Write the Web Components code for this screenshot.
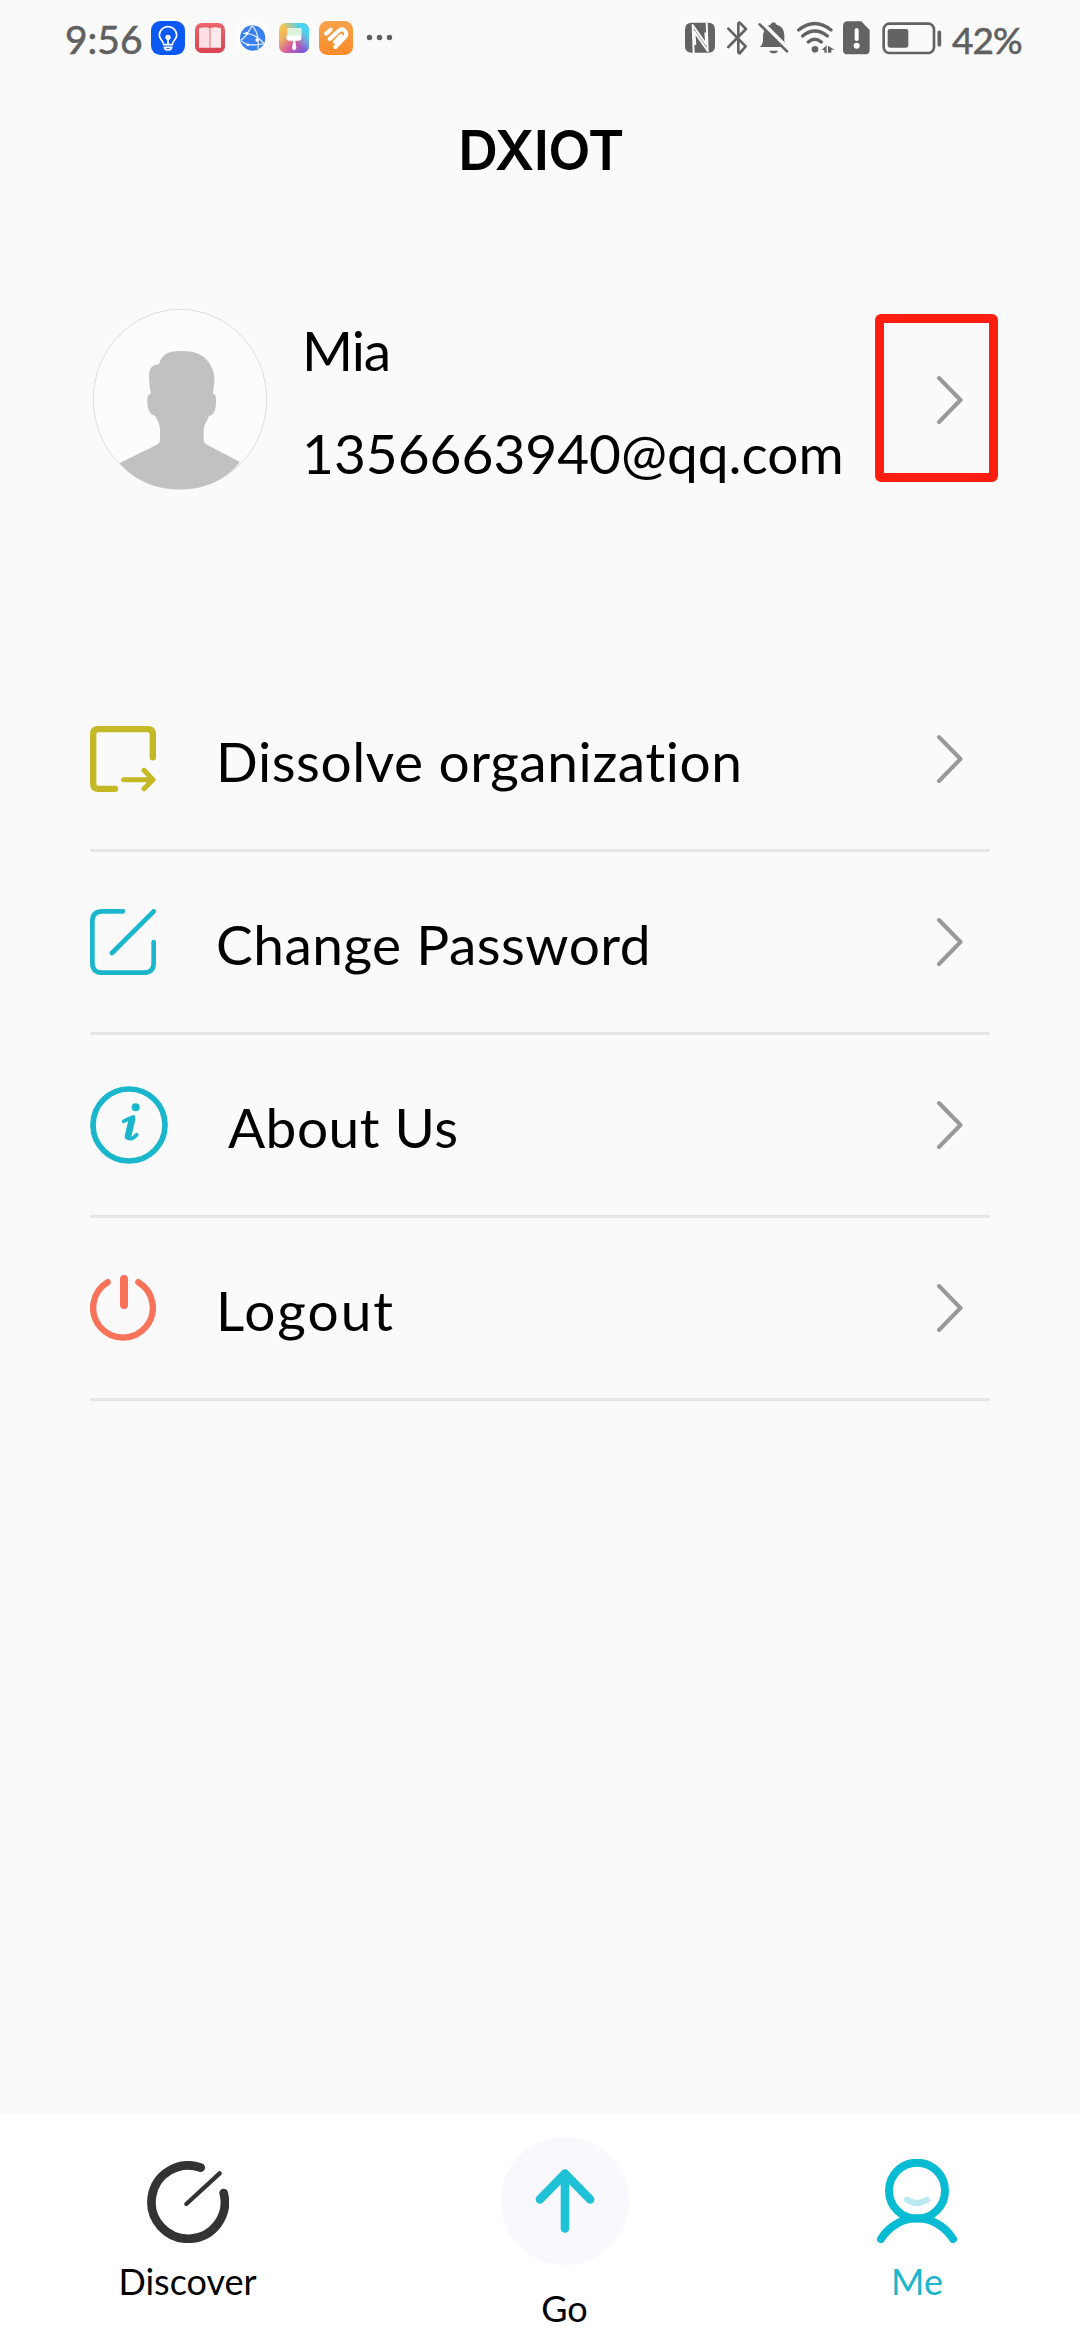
<!DOCTYPE html>
<html lang="en">
<head>
<meta charset="utf-8">
<title>DXIOT</title>
<style>
  html, body { margin: 0; height: 100%; }
  body {
    background: #fafafa;
    color: #000;
    font-family: Lato, "Noto Sans", sans-serif;
  }
</style>
</head>
<body>
<app-screen>
  <status-bar slot="status" time="9:56" battery="42%"></status-bar>
  <page-title slot="title">DXIOT</page-title>
  <user-profile>
    <span slot="name">Mia</span>
    <span slot="email">1356663940@qq.com</span>
  </user-profile>
  <menu-list>
    <menu-row icon="dissolve" style="--spacing: 0.6px">Dissolve organization</menu-row>
    <menu-row icon="edit" style="--spacing: 0.5px">Change Password</menu-row>
    <menu-row icon="about" style="--spacing: 0.5px">About Us</menu-row>
    <menu-row icon="power" style="--spacing: 2px">Logout</menu-row>
  </menu-list>
  <tab-bar slot="tabs">
    <tab-item icon="discover">Discover</tab-item>
    <tab-item icon="go">Go</tab-item>
    <tab-item icon="me" active>Me</tab-item>
  </tab-bar>
</app-screen>

<script>
// Icons, by name
const ICONS = {
  dissolve: `<svg width="66" height="66" viewBox="0 0 198 198" fill="none" stroke="#c5b825" stroke-linecap="round" stroke-linejoin="round">
    <path stroke-width="19" d="M75 188.500H25Q9.500 188.500 9.500 173V25Q9.500 9.500 25 9.500H173Q188.500 9.500 188.500 25V94"/>
    <path stroke-width="15" d="M101 161H188M162 133L189 161L162 188"/></svg>`,
  edit: `<svg width="66" height="66" viewBox="0 0 198 198" fill="none" stroke="#1ab7cc" stroke-width="14" stroke-linecap="round">
    <path d="M99 7H37Q7 7 7 37V161Q7 191 37 191H161Q191 191 191 161V99M66 132L191 7"/></svg>`,
  about: `<svg width="78" height="78" viewBox="0 0 234 234" fill="none" stroke="#1ab7cc" stroke-linecap="round" stroke-linejoin="round">
    <circle cx="117" cy="117" r="108" stroke-width="17"/>
    <circle cx="137" cy="64" r="12" fill="#1ab7cc" stroke="none"/>
    <path stroke-width="20" d="M126 100L114 151"/>
    <path stroke-width="11" d="M101 106Q114 98 130 93M113 156Q125 163 140 146"/></svg>`,
  power: `<svg width="66" height="66" viewBox="0 0 198 198" fill="none" stroke="#f9735a" stroke-linecap="round">
    <path stroke-width="19" d="M53 21.500A89.500 89.500 0 1 0 145 21.500"/>
    <path stroke-width="24" d="M102 12V90"/></svg>`,
  discover: `<svg width="82" height="82" viewBox="0 0 246 246" fill="none" stroke="#333" stroke-linecap="round">
    <path stroke-width="26" d="M161 20A110 110 0 1 0 230 96"/>
    <path stroke-width="13" d="M118 129L218 37"/></svg>`,
  go: `<svg width="128" height="128" viewBox="0 0 384 384" fill="none" stroke="#1fc1d6" stroke-width="26" stroke-linecap="round" stroke-linejoin="round">
    <circle cx="192" cy="192" r="192" fill="#f8f8fd" stroke="none"/>
    <path d="M192 274V110M117 187L192 110L267 187"/></svg>`,
  me: `<svg width="80" height="84" viewBox="0 0 240 252" fill="none" stroke="#06bbd2" stroke-linecap="round">
    <circle cx="120" cy="95" r="84" stroke-width="24"/>
    <path stroke-width="24" d="M12 240C35 202 76 178 120 178S205 202 228 240"/>
    <path stroke="#b9e9ee" stroke-width="18" d="M90 122Q120 143 150 122"/></svg>`,
  chevron: `<svg width="27" height="50" viewBox="0 0 27 50" fill="none" stroke="#999" stroke-width="4" stroke-linecap="round" stroke-linejoin="round">
    <path d="M3 3L24.500 25L3 47"/></svg>`,
  avatar: `<svg width="174" height="181" viewBox="39 56 522 543" preserveAspectRatio="none">
    <ellipse cx="300" cy="327" rx="260" ry="270" fill="#fcfcfc" stroke="#ddd" stroke-width="3"/>
    <path fill="#c1c1c1" d="M237 222C244 195 262 182 300 182C342 182 370 190 388 219C401 240 404 255 403 276L399 310C408 312 408 318 408 332C408 358 403 374 387 377C381 393 371 402 371 425V448Q371 458 381 463L480 515C440 565 380 597 300 597C220 597 158 566 119 518L229 464Q240 459 240 448V419C240 400 231 389 226 377C209 372 202 356 202 334C202 319 202 313 213 310C209 294 207 275 207 258C207 235 217 222 237 222Z"/></svg>`
};

const STATUS_LEFT = `
  <svg style="margin-left:10px" width="34" height="34" viewBox="0 0 102 102" fill="none" stroke="#fff" stroke-width="5" stroke-linecap="round">
    <rect width="102" height="102" rx="28" fill="#0b58f2" stroke="none"/>
    <path d="M38 71C38 58 25 57 25 43A26 26 0 0 1 77 43C77 57 64 58 64 71ZM40 79H62Q61 87 51 87T40 79M51 55V70"/>
    <circle cx="51" cy="49" r="8" fill="#fff" stroke="none"/></svg>
  <svg style="margin-left:10px" width="30" height="30" viewBox="0 0 90 90">
    <defs><linearGradient id="r" x2="0" y2="1"><stop stop-color="#ec666c"/><stop offset="1" stop-color="#d8434e"/></linearGradient></defs>
    <rect width="90" height="90" rx="20" fill="url(#r)"/>
    <path d="M12 16Q34 10 44 16V74H12Z" fill="#fde0e5"/><path d="M46 16Q60 10 78 16V74H46Z" fill="#fce9ec"/>
    <path d="M45 16V74" stroke="#e79ba5" stroke-width="3"/></svg>
  <svg style="margin-left:13px" width="29" height="30" viewBox="0 0 87 90" fill="none" stroke="#d5e7ff" stroke-width="4">
    <rect width="87" height="90" rx="20" fill="#fff" stroke="none"/>
    <circle cx="44" cy="45" r="38" fill="#397fed" stroke="none"/>
    <path d="M8 52Q24 43 42 8M15 31Q53 30 78 62M42 8Q65 29 60 78M10 54Q32 73 79 62"/>
    <g fill="#fff" stroke="none"><circle cx="26" cy="31" r="5"/><circle cx="57" cy="51" r="5"/><circle cx="29" cy="66" r="4"/></g></svg>
  <svg style="margin-left:12px" width="30" height="30" viewBox="0 0 90 90">
    <defs>
      <linearGradient id="a" x2="1" y2="1"><stop stop-color="#f7d34f"/><stop offset=".3" stop-color="#eeb45c"/><stop offset=".58" stop-color="#d95c9d"/><stop offset="1" stop-color="#5558f5"/></linearGradient>
      <linearGradient id="b" x1=".3" y1=".6" x2="1" y2="0"><stop offset=".2" stop-color="#55dfe9" stop-opacity="0"/><stop offset=".7" stop-color="#45d5f2"/></linearGradient>
    </defs>
    <rect width="90" height="90" rx="20" fill="url(#a)"/><rect width="90" height="90" rx="20" fill="url(#b)"/>
    <path fill="#fff" d="M26 16H67V44Q67 53 58 53H49L52 75Q46 89 39 75L43 53H31Q22 53 22 44V38H26Z"/>
    <path fill="#d9f4da" d="M26 18H67V38H26Z"/></svg>
  <svg style="margin-left:10px" width="34" height="34" viewBox="0 0 102 102" fill="none" stroke="#fff" stroke-width="12" stroke-linecap="round" stroke-linejoin="round">
    <defs><linearGradient id="o" x2="0" y2="1"><stop stop-color="#f8a34b"/><stop offset="1" stop-color="#fb8b2a"/></linearGradient></defs>
    <rect width="102" height="102" rx="25" fill="url(#o)" stroke="none"/>
    <path d="M21 38L35 26M32 54L61 28Q72 21 79 31Q85 41 77 49L49 78"/>
    <path d="M48 63L66 45"/></svg>
  <svg style="margin-left:13px" width="27" height="34" viewBox="0 0 27 34" fill="#606060">
    <circle cx="3.500" cy="16.500" r="2.700"/><circle cx="13.500" cy="16.500" r="2.700"/><circle cx="23.500" cy="16.500" r="2.700"/></svg>`;

const STATUS_RIGHT = `
  <svg width="30" height="32" viewBox="0 0 90 96">
    <path fill="#636363" d="M20 2H70Q90 2 90 24V72Q90 92 70 92H20Q0 92 0 72V24Q0 2 20 2Z"/>
    <path fill="none" stroke="#fafafa" stroke-width="6" stroke-linejoin="round" d="M26 93L23 9L64 68L61 31M65 1L68 87L28 29L31 69"/></svg>
  <svg style="margin-left:12px" width="21" height="34" viewBox="0 0 63 102" fill="none" stroke="#636363" stroke-width="8" stroke-linecap="round" stroke-linejoin="round">
    <path d="M4 23L56 76L38 97Q34 97 34 91V10Q34 4 38 5L57 24L4 78"/></svg>
  <svg style="margin-left:10px" width="31" height="34" viewBox="0 0 93 102" fill="#636363">
    <path d="M5 78Q14 72 15 61V42Q20 13 37 11Q47 -3 56 11Q78 16 79 42V61Q80 71 89 78ZM34 89H60Q57 97 47 97T34 89Z"/>
    <path fill="none" stroke="#fafafa" stroke-width="17" d="M5 1L94 90"/>
    <path fill="none" stroke="#636363" stroke-width="8" stroke-linecap="round" d="M5 10L87 91"/></svg>
  <svg style="margin-left:8px" width="38" height="34" viewBox="0 0 114 102" fill="none" stroke="#636363" stroke-width="10" stroke-linecap="round">
    <path d="M5 27Q53 -12 102 27M17 45Q53 15 91 45M34 63Q53 47 73 63"/>
    <circle cx="54" cy="85" r="10" fill="#636363" stroke="none"/>
    <path fill="#636363" stroke="none" d="M74 87L89 73V95H82V87ZM93 74L113 86H103V95H93Z"/></svg>
  <svg style="margin-left:8px" width="27" height="34" viewBox="0 0 81 102" fill="#636363">
    <path d="M14 1H55L80 27V86Q80 100 66 100H14Q0 100 0 86V15Q0 1 14 1Z"/>
    <path stroke="#fff" stroke-width="12" stroke-linecap="round" d="M41 27V54"/><circle cx="41" cy="74" r="9" fill="#fff"/></svg>
  <svg style="margin-left:12px" width="60" height="34" viewBox="0 0 180 102" fill="none" stroke="#636363">
    <rect x="5" y="8" width="151" height="88" rx="17" stroke-width="8"/>
    <rect x="17" y="24" width="62" height="56" rx="7" fill="#636363" stroke="none"/>
    <path stroke-width="11" stroke-linecap="round" d="M172 34V71"/></svg>`;

// Base class: opens the shadow root and fills it
class BaseElement extends HTMLElement {
  connectedCallback() {
    if (this.shadowRoot) return;
    this.attachShadow({ mode: 'open' }).innerHTML = this.render();
  }
}

class AppScreen extends BaseElement {
  render() {
    return `
      <style>
        :host { display: flex; flex-direction: column; height: 2340px; overflow: hidden; }
        main { flex: 1; }
      </style>
      <slot name="status"></slot>
      <slot name="title"></slot>
      <main><slot></slot></main>
      <slot name="tabs"></slot>`;
  }
}

class StatusBar extends BaseElement {
  render() {
    return `
      <style>
        :host {
          display: flex; justify-content: space-between; box-sizing: border-box;
          height: 76px; padding: 0 59px 0 65px; color: #606060;
        }
        div { display: flex; align-items: center; }
        .time, .battery { -webkit-text-stroke: 0.6px #606060; white-space: nowrap; }
        .time { font-size: 39px; width: 76px; padding-top: 2px; }
        .battery { font-size: 37px; width: 69px; margin-left: 10px; padding-top: 2px; letter-spacing: -1px; }
        svg { flex: none; }
      </style>
      <div><span class="time">${this.getAttribute('time')}</span>${STATUS_LEFT}</div>
      <div>${STATUS_RIGHT}<span class="battery">${this.getAttribute('battery')}</span></div>`;
  }
}

class PageTitle extends BaseElement {
  render() {
    return `
      <style>
        :host {
          display: flex; align-items: center; justify-content: center; height: 148px;
          font: 600 55px Inter, sans-serif; letter-spacing: -0.7px; padding-left: 2px;
        }
      </style>
      <slot></slot>`;
  }
}

class UserProfile extends BaseElement {
  render() {
    return `
      <style>
        :host {
          display: flex; align-items: center; box-sizing: border-box; height: 181px;
          margin-top: 85px; padding: 0 117px 0 93px; position: relative;
        }
        .texts { flex: 1; margin-left: 35px; padding-top: 4px; font-size: 55px; line-height: 66px; }
        .name { letter-spacing: -1px; }
        .email { margin-top: 37px; white-space: nowrap; }
        svg { flex: none; display: block; }
        .marker {
          position: absolute; left: 875px; top: 5px; width: 123px; height: 168px;
          box-sizing: border-box; border: 9px solid #ff1e10; border-radius: 6px;
        }
      </style>
      ${ICONS.avatar}
      <div class="texts">
        <div class="name"><slot name="name"></slot></div>
        <div class="email"><slot name="email"></slot></div>
      </div>
      ${ICONS.chevron}
      <div class="marker"></div>`;
  }
}

class MenuList extends BaseElement {
  render() {
    return `
      <style>
        :host { display: flex; flex-direction: column; margin: 179px 90px 0; }
      </style>
      <slot></slot>`;
  }
}

class MenuRow extends BaseElement {
  render() {
    return `
      <style>
        :host {
          display: flex; align-items: center; gap: 60px; height: 180px;
          padding-right: 27px; border-bottom: 3px solid #e6e6e6;
        }
        .label { flex: 1; font-size: 55px; padding-top: 3px; letter-spacing: var(--spacing, 0); white-space: nowrap; }
        svg { flex: none; }
      </style>
      ${ICONS[this.getAttribute('icon')]}
      <span class="label"><slot></slot></span>
      ${ICONS.chevron}`;
  }
}

class TabBar extends BaseElement {
  render() {
    return `
      <style>
        :host { display: grid; grid-template-columns: 375px 379px 326px; height: 226px; background: #fff; }
      </style>
      <slot></slot>`;
  }
}

class TabItem extends BaseElement {
  render() {
    return `
      <style>
        :host { display: flex; flex-direction: column; align-items: center; padding-top: 47px; font-size: 36px; line-height: 44px; }
        :host([icon="go"]) { padding-top: 23px; }
        :host([icon="me"]) { padding-top: 45px; }
        :host([active]) { color: #1ab7cc; }
        .label { margin-top: 16px; }
        :host([icon="go"]) .label { margin-top: 21px; }
      </style>
      ${ICONS[this.getAttribute('icon')]}
      <span class="label"><slot></slot></span>`;
  }
}

customElements.define('app-screen', AppScreen);
customElements.define('status-bar', StatusBar);
customElements.define('page-title', PageTitle);
customElements.define('user-profile', UserProfile);
customElements.define('menu-list', MenuList);
customElements.define('menu-row', MenuRow);
customElements.define('tab-bar', TabBar);
customElements.define('tab-item', TabItem);
</script>
</body>
</html>
